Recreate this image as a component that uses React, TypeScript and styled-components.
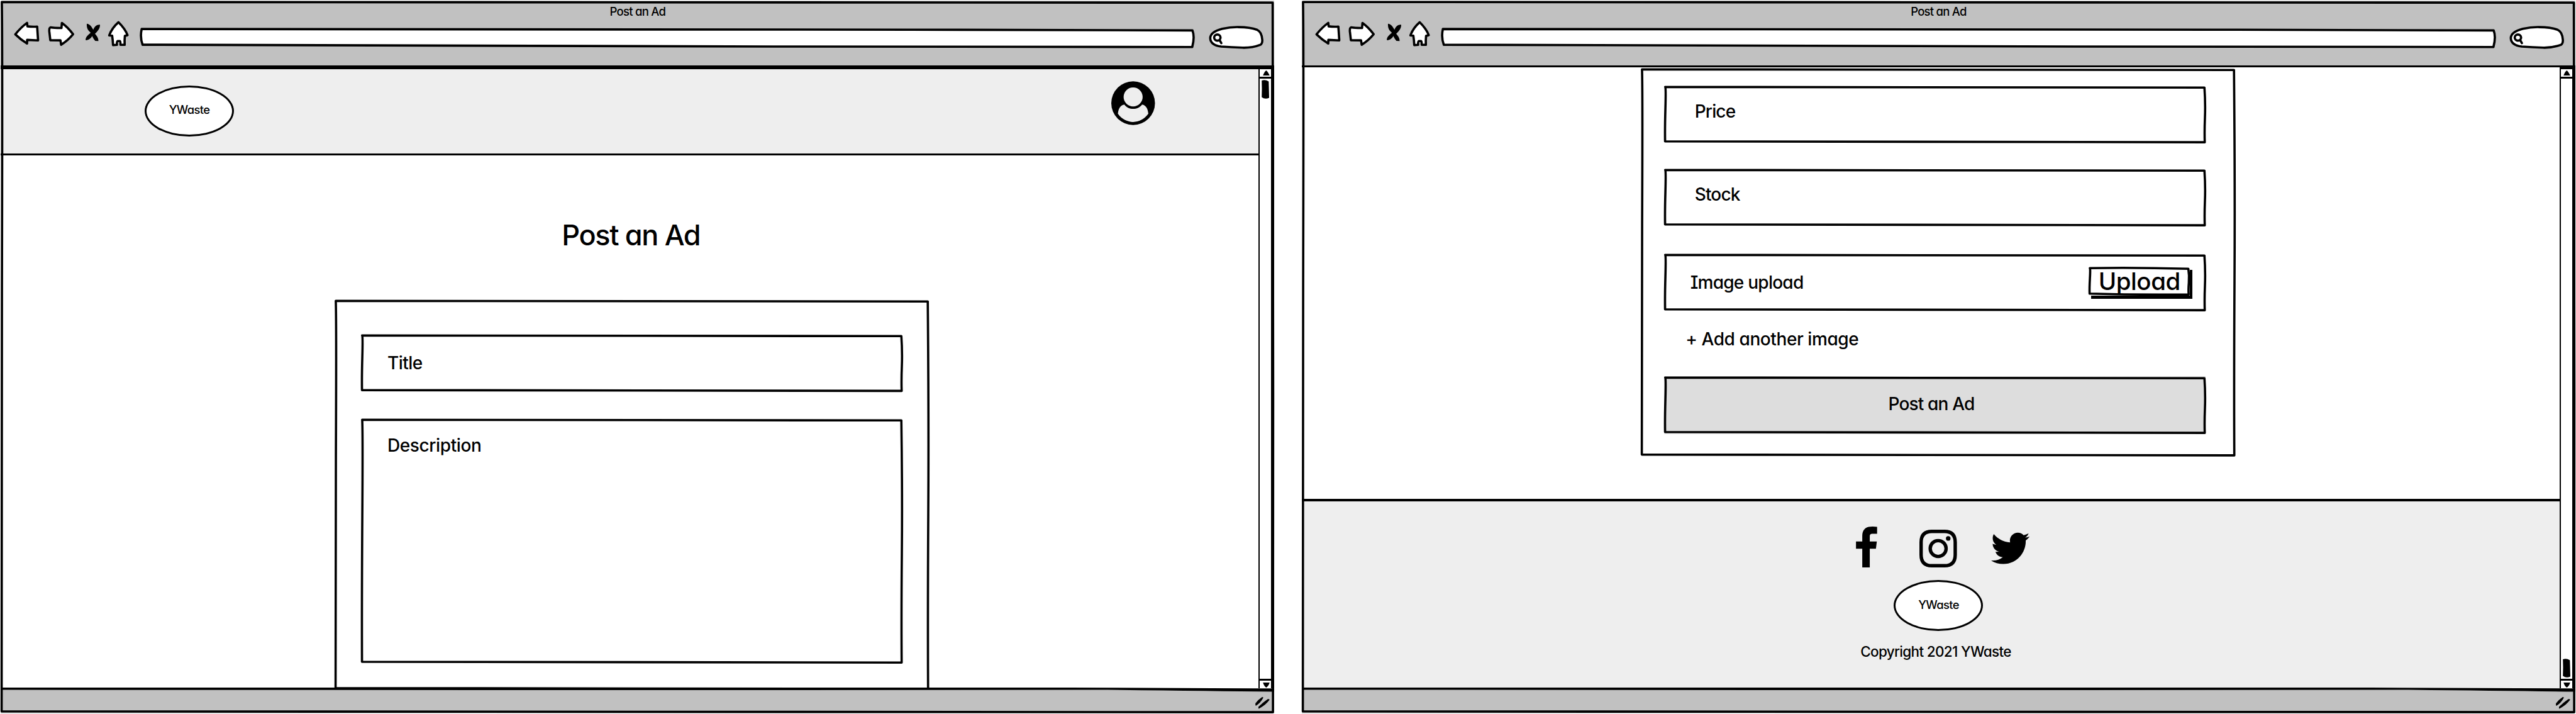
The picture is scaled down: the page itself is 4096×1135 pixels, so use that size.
import React from "react";
import styled, { createGlobalStyle } from "styled-components";
import { FaTwitter } from "react-icons/fa";

const INK = "#000";
const CHROME = "#c1c1c1";
const BAND = "#eeeeee";

const GlobalStyle = createGlobalStyle`
  *, *::before, *::after { box-sizing: border-box; }
  html, body { margin: 0; padding: 0; background: #fff; overflow: hidden; }
  body {
    font-family: Inter, "Open Sans", sans-serif;
    font-feature-settings: "cv11", "cv08", "kern";
    font-weight: 500;
    color: ${INK};
  }
  svg { display: block; overflow: visible; }
`;

const Page = styled.div`
  display: flex;
  gap: 43.6px;
  width: 4096px;
  height: 1135px;
  padding: 1px 0 1px 1.4px;
  background: #fff;
`;

const BrowserWindow = styled.section`
  position: relative;
  display: flex;
  flex-direction: column;
  flex: none;
  width: 2025px;
  height: 1133px;
`;

const Overlay = styled.svg`
  position: absolute;
  top: 0;
  left: 0;
  pointer-events: none;
  fill: none;
  stroke: ${INK};
  stroke-linejoin: round;
`;

const Toolbar = styled.header`
  display: flex;
  flex-direction: column;
  height: 106px;
  padding: 5.3px 0 0 18.9px;
  background: ${CHROME};
  border-bottom: 3px solid ${INK};
`;

const Label = styled.span<{ $size: number; $line?: number; $track?: number; $weight?: number }>`
  font-size: ${(p) => p.$size}px;
  line-height: ${(p) => p.$line ?? 36}px;
  letter-spacing: ${(p) => p.$track ?? -0.03}em;
  font-weight: ${(p) => p.$weight ?? 500};
  white-space: nowrap;
`;

const WindowTitle = styled.div`
  display: flex;
  justify-content: center;
  margin-left: -18.9px;
  height: 25.5px;
`;

const Tools = styled.div`
  display: flex;
`;

const Tool = styled.svg<{ $width: number; $before?: number }>`
  flex: none;
  width: ${(p) => p.$width}px;
  height: 43.44px;
  margin-left: ${(p) => p.$before ?? 0}px;
  fill: #fff;
  stroke: ${INK};
  stroke-width: 5;
  stroke-linejoin: round;
  stroke-linecap: round;
`;

const Body = styled.div`
  display: flex;
  height: 987px;
`;

const Viewport = styled.main`
  display: flex;
  flex-direction: column;
  width: 2000px;
  overflow: hidden;
  background: #fff;
`;

const Scrollbar = styled.aside`
  display: flex;
  flex-direction: column;
  width: 25px;
  background: #fff;
  border-left: 2px solid ${INK};
  border-right: 5px solid ${INK};
`;

const ScrollButton = styled.div<{ $edge: "top" | "bottom" }>`
  display: flex;
  justify-content: center;
  align-items: ${(p) => (p.$edge === "top" ? "flex-end" : "flex-start")};
  height: ${(p) => (p.$edge === "top" ? 18 : 15)}px;
  padding: ${(p) => (p.$edge === "top" ? "0 0 2px 2px" : "3px 0 0 2px")};
  border-top: 3px solid ${INK};
  border-bottom: ${(p) => (p.$edge === "top" ? 3 : 0)}px solid ${INK};
`;

const Track = styled.div<{ $end?: boolean }>`
  display: flex;
  flex: 1;
  justify-content: center;
  align-items: ${(p) => (p.$end ? "flex-end" : "flex-start")};
  padding: 1.5px 0 2.5px;
`;

const StatusBar = styled.footer`
  position: relative;
  display: flex;
  justify-content: flex-end;
  align-items: flex-start;
  height: 40px;
  padding: 13.6px 7.4px 0 0;
  background: ${CHROME};
`;

const SiteHeader = styled.div`
  display: flex;
  justify-content: space-between;
  align-items: flex-start;
  flex: none;
  height: 139.5px;
  padding: 0 165.4px 0 228.6px;
  background: ${BAND};
  border-top: 3px solid ${INK};
  border-bottom: 3px solid ${INK};
`;

const Logo = styled.div<{ $top: number }>`
  display: flex;
  justify-content: center;
  align-items: center;
  width: 142px;
  height: 81px;
  margin-top: ${(p) => p.$top}px;
  padding-bottom: 4.5px;
  background: #fff;
  border: 3px solid ${INK};
  border-radius: 50%;
`;

const Avatar = styled.svg`
  width: 69.5px;
  height: 70px;
  margin-top: 19px;
`;

const Column = styled.div<{ $left: number; $top: number; $grow?: boolean }>`
  display: flex;
  flex-direction: column;
  flex: ${(p) => (p.$grow ? "1" : "none")};
  width: 945.6px;
  margin: ${(p) => p.$top}px 0 ${(p) => (p.$grow ? -3 : 0)}px ${(p) => p.$left}px;
`;

const Heading = styled.h1`
  display: flex;
  justify-content: center;
  margin: 0 0 72.2px;
  padding-right: 3px;
  font-weight: 500;
`;

const Card = styled.form<{ $pad: string; $grow?: boolean }>`
  position: relative;
  display: flex;
  flex-direction: column;
  flex: ${(p) => (p.$grow ? "1" : "none")};
  padding: ${(p) => p.$pad};
`;

const Field = styled.div<{ $height: number; $after?: number; $indent?: number; $lift?: number; $multiline?: boolean }>`
  position: relative;
  display: flex;
  justify-content: space-between;
  align-items: ${(p) => (p.$multiline ? "flex-start" : "center")};
  flex: none;
  height: ${(p) => p.$height}px;
  margin-bottom: ${(p) => p.$after ?? 0}px;
  padding: ${(p) => (p.$multiline ? 25 : 0)}px 25px ${(p) => p.$lift ?? 0}px ${(p) => p.$indent ?? 42}px;
`;

const UploadButton = styled.div`
  position: relative;
  display: flex;
  justify-content: center;
  align-items: center;
  width: 161px;
  height: 46px;
  margin-bottom: 4px;
  background: #fff;
  box-shadow: 4px 5px 0 ${INK};
`;

const AddImage = styled.div`
  height: 103.3px;
  padding: 26.5px 0 0 34.5px;
`;

const SubmitButton = styled.div`
  position: relative;
  display: flex;
  justify-content: center;
  align-items: center;
  height: 92px;
  padding: 0 11px 4px 0;
  background: #dddddd;
`;

const SiteFooter = styled.div`
  display: flex;
  flex-direction: column;
  align-items: center;
  flex: 1;
  margin-top: 67.4px;
  padding: 39.6px 0 0 25px;
  background: ${BAND};
  border-top: 4px solid ${INK};
`;

const Social = styled.div`
  display: flex;
  align-items: flex-end;
  height: 65px;
  margin-left: 13.7px;
`;

const FacebookMark = styled.svg`
  width: 34px;
  height: 65px;
  margin-right: 66.5px;
`;

const InstagramMark = styled.svg`
  width: 59.6px;
  height: 60px;
  margin-right: 54.3px;
  fill: none;
  stroke: ${INK};
`;

const TwitterMark = styled(FaTwitter)`
  width: 61.3px;
  height: 61.3px;
  margin-bottom: -0.8px;
`;

const Copyright = styled.div`
  display: flex;
  margin: 17px 9px 0 0;
`;

/* Hand-drawn rectangle outline that bows slightly along each edge. */
function Sketch({ w, h, stroke = 3.6 }: { w: number; h: number; stroke?: number }) {
  const d = [
    `M1.9 2.2 Q${w * 0.45} 0.8 ${w - 2.4} 3.3`,
    `Q${w - 0.7} ${h * 0.3} ${w - 1.6} ${h * 0.55}`,
    `T${w - 1.9} ${h - 1.9}`,
    `Q${w * 0.5} ${h - 0.9} 1.6 ${h - 3.2}`,
    `Q1.2 ${h * 0.75} 2.1 ${h * 0.4}`,
    `T1.9 2.2Z`,
  ].join(" ");
  return (
    <Overlay width={w} height={h} strokeWidth={stroke}>
      <path d={d} />
    </Overlay>
  );
}

function BrowserTools() {
  return (
    <Tools>
      <Tool $width={46.33} viewBox="28 44 64 60">
        <path d="M34 75.3 Q46 60 59.8 50 L60.7 57.7 Q71 59 82 58.3 Q83 74 84 88.5 L60 87.3 L59.8 95.5 Q46 87 34 75.3Z" />
      </Tool>
      <Tool $width={46.33} $before={7.24} viewBox="102 44 64 60">
        <path d="M160.3 75 Q149 60 135.7 50.3 L134.8 61.3 Q120 61.5 111 60 Q107.5 61 108 68 L110.3 88 L132.6 88.3 L134 98 Q149 89 160.3 75Z" />
      </Tool>
      <Tool $width={26.8} $before={13.75} viewBox="185 44 37 60">
        <path
          fill="#000"
          stroke="none"
          d="M190.5 52 C197 52 202 60 204.7 65 C208 57 213 53 219.5 54 C220 62 214 69 208.5 74 C213 79 216.5 84 216 90 L209 89.5 C206 86 204 83 202.3 79 C199 85 194 88.5 188 88 C187.5 81 193 77 199 71.5 C192 66 190 60 190.5 52Z"
        />
      </Tool>
      <Tool $width={36.9} $before={9.4} viewBox="235 44 51 60">
        <path d="M260.3 48.5 Q275 63 280.3 77 L274.5 78.5 Q273.5 88 274 98.3 L264.8 98.3 Q265 91 263.5 90 L258.5 90 Q256.5 91 257 98.3 L248.5 98.8 Q248 88 246.5 78.3 L240 77.5 Q246 61 260.3 48.5Z" />
      </Tool>
      <Tool $width={1678.8} $before={15.2} viewBox="307 44 2319 60">
        <path d="M311.5 63.5 Q1200 63 2000 65 L2619.5 66.6 Q2625 81 2619 103 L1700 102 Q900 99 313.5 98 Q307.5 82 311.5 63.5Z" />
      </Tool>
      <Tool $width={89.8} $before={19.55} viewBox="2653 44 124 60">
        <path d="M2657.6 83.3 Q2658 70 2684 63 Q2702 59 2719.6 59.3 Q2746 59.5 2760 65 Q2771 70 2772 88 Q2772 96 2768 98 Q2750 105 2728.6 104.5 Q2705 103.5 2681.7 102 Q2658 99 2657.6 83.3Z" />
        <ellipse cx="2673.2" cy="82.3" rx="7" ry="6.7" />
        <path d="M2678.5 88.5 L2682 94.5" />
      </Tool>
    </Tools>
  );
}

function BrowserFrame({ scrolledToEnd, children }: { scrolledToEnd?: boolean; children: React.ReactNode }) {
  return (
    <BrowserWindow>
      <Toolbar>
        <WindowTitle>
          <Label $size={18.5} $line={25.5} $track={-0.04}>Post an Ad</Label>
        </WindowTitle>
        <BrowserTools />
      </Toolbar>
      <Body>
        <Viewport>{children}</Viewport>
        <Scrollbar>
          <ScrollButton $edge="top">
            <svg width="11" height="8" viewBox="0 0 11 8">
              <path d="M5.3 0 Q7 0.5 10.8 8 L0.2 8 Q3 1 5.3 0Z" />
            </svg>
          </ScrollButton>
          <Track $end={scrolledToEnd}>
            <svg width="12" height="30" viewBox="0 0 12 30">
              <path d="M0.2 1 Q6 -1 11.3 2.5 L12 28.5 Q5.5 31.5 0.2 27.5 Q0.8 14 0.2 1Z" />
            </svg>
          </Track>
          <ScrollButton $edge="bottom">
            <svg width="11" height="8" viewBox="0 0 11 8">
              <path d="M0.2 0 L10.8 0 Q9 5.5 5.5 8 Q2 6 0.2 0Z" />
            </svg>
          </ScrollButton>
        </Scrollbar>
      </Body>
      <StatusBar>
        <Overlay width="2025" height="6" stroke="none">
          <path fill="#000" stroke="none" d="M0 -1 L1700 -1 L2025 0.5 L2025 5.6 Q1920 4.4 1760 2.6 Q900 3.4 0 2.4Z" />
        </Overlay>
        <svg width="23.2" height="18.8" viewBox="0 0 32 26">
          <path d="M15 0 Q17 0 17.6 1.5 Q11 14 1 19.4 Q-0.5 18 0.3 14 Q6 6 15 0Z" />
          <path d="M27 4.8 Q30.5 4 31.4 6 Q23 18 8 25.6 Q6 25 7 21.5 Q15 13 27 4.8Z" />
        </svg>
      </StatusBar>
      <Sketch w={2025} h={1133} />
    </BrowserWindow>
  );
}

function Brand({ top }: { top: number }) {
  return (
    <Logo $top={top}>
      <Label $size={18.4} $line={24} $track={-0.035}>YWaste</Label>
    </Logo>
  );
}

function TopOfPage() {
  return (
    <>
      <SiteHeader>
        <Brand top={26} />
        <Avatar viewBox="2440 178.7 96 96">
          <circle cx="2488" cy="226.7" r="48" />
          <circle cx="2488" cy="213" r="20.9" fill={BAND} />
          <path
            fill={BAND}
            d="M2454.5 250 C2455.5 240 2459 231 2468.8 229.7 C2478 242.5 2498 242.5 2507.6 229.7 C2517 231 2520.5 240 2521.4 250 C2504 274 2472 274 2454.5 250Z"
          />
        </Avatar>
      </SiteHeader>
      <Column $left={530.6} $top={97.7} $grow>
        <Heading>
          <Label $size={45}  $line={60}>Post an Ad</Label>
        </Heading>
        <Card $pad="54.9px 42px 0" $grow>
          <Field $height={92.3} $after={41}>
            <Sketch w={861.6} h={92.3} />
            <Label $size={28} $track={-0.02}>Title</Label>
          </Field>
          <Field $height={390.2} $multiline>
            <Sketch w={861.6} h={390.2} />
            <Label $size={28} $track={-0.014}>Description</Label>
          </Field>
          <Sketch w={945.6} h={621} />
        </Card>
      </Column>
    </>
  );
}

function EndOfPage() {
  return (
    <>
      <Column $left={539.5} $top={1.2}>
        <Card $pad="28px 47.8px 36px 36.2px">
          <Field $height={92} $after={39.9} $indent={49} $lift={9.5}>
            <Sketch w={861.6} h={92} />
            <Label $size={28}>Price</Label>
          </Field>
          <Field $height={92} $after={42.6} $indent={49} $lift={9.5}>
            <Sketch w={861.6} h={92} />
            <Label $size={28}>Stock</Label>
          </Field>
          <Field $height={92} $indent={42}>
            <Sketch w={861.6} h={92} />
            <Label $size={28} $track={-0.027}>Image upload</Label>
            <UploadButton>
              <Sketch w={161} h={46} />
              <Label $size={38.4} $line={44} $track={-0.01}>Upload</Label>
            </UploadButton>
          </Field>
          <AddImage>
            <Label $size={28} $track={-0.015}>+ Add another image</Label>
          </AddImage>
          <SubmitButton>
            <Sketch w={861.6} h={92} />
            <Label $size={28}>Post an Ad</Label>
          </SubmitButton>
          <Sketch w={945.6} h={617.8} />
        </Card>
      </Column>
      <SiteFooter>
        <Social>
          <FacebookMark viewBox="4077 1156.3 47 89.7">
            <path d="M4091 1246 V1205 H4077.2 V1189 H4091 V1177 C4091 1164 4098 1156.5 4109 1156.5 Q4116 1156 4123.6 1157 V1172 H4113 C4109 1172 4107.5 1174 4107.5 1177 V1189 H4123 L4121 1205 H4107.5 V1246Z" />
          </FacebookMark>
          <InstagramMark viewBox="4216 1163.5 82 82.5" strokeWidth="7.4">
            <path d="M4243 1167.2 H4271 Q4294.3 1167.2 4294.3 1191 V1218.5 Q4294.3 1242.3 4271 1242.3 H4243 Q4219.7 1242.3 4219.7 1218.5 V1191 Q4219.7 1167.2 4243 1167.2Z" />
            <circle cx="4257" cy="1204.7" r="17.4" />
            <circle cx="4279" cy="1182.7" r="5" fill="#000" stroke="none" />
          </InstagramMark>
          <TwitterMark />
        </Social>
        <Brand top={20.4} />
        <Copyright>
          <Label $size={22.5} $line={32}>Copyright 2021 YWaste</Label>
        </Copyright>
      </SiteFooter>
    </>
  );
}

export default function App() {
  return (
    <>
      <GlobalStyle />
      <Page>
        <BrowserFrame>
          <TopOfPage />
        </BrowserFrame>
        <BrowserFrame scrolledToEnd>
          <EndOfPage />
        </BrowserFrame>
      </Page>
    </>
  );
}
